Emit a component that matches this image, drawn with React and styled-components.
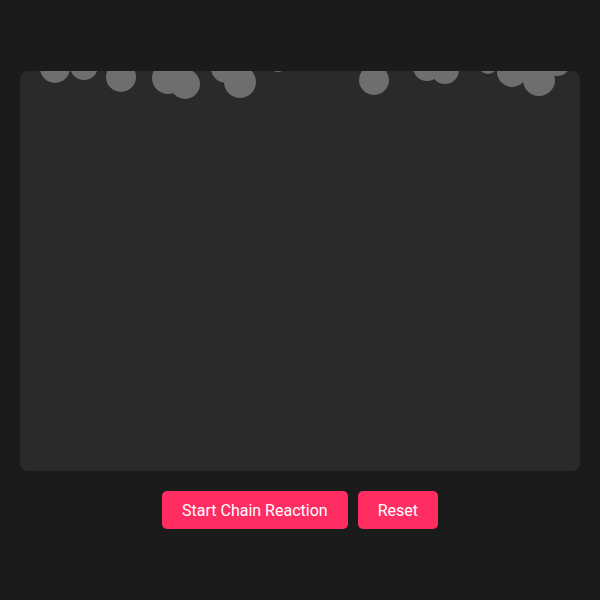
import React from 'react'
import styled, { createGlobalStyle } from 'styled-components'

const Global = createGlobalStyle`
    html, body {
        margin: 0;
        background: #1b1b1b;
        font-family: Roboto, 'Liberation Sans', sans-serif;
    }
`

const Page = styled.div`
    width: 600px;
    height: 600px;
    box-sizing: border-box;
    padding: 71px 20px 0;
    display: flex;
    flex-direction: column;
    align-items: center;
    gap: 20px;
`

const Stage = styled.div`
    position: relative;
    width: 560px;
    height: 400px;
    background: #2a2a2a;
    border-radius: 8px;
    overflow: hidden;
`

const Ball = styled.div`
    position: absolute;
    border-radius: 50%;
    background: #6e6e6e;
`

const Controls = styled.div`
    display: flex;
    gap: 10px;
`

const Button = styled.button`
    height: 38px;
    padding: 0 20px;
    border: none;
    border-radius: 5px;
    background: #ff2d62;
    color: #fff;
    font-family: Roboto, 'Liberation Sans', sans-serif;
    font-size: 16px;
    cursor: pointer;
`

// page coords: x, y (centre), r
const balls = [
    [55, 68, 15], [84, 66, 14], [121, 77, 15], [168, 78, 16], [185, 84, 15],
    [226, 68, 15], [240, 82, 16], [278, 64, 8], [374, 80, 15], [427, 67, 14],
    [445, 70, 14], [488, 64, 10], [512, 72, 15], [539, 80, 16], [557, 62, 14],
    [565, 60, 10],
]

const App = () => {
    return (
        <>
            <Global />
            <Page>
                <Stage>
                    {balls.map(([x, y, r], i) => (
                        <Ball key={i} style={{ left: x - 20 - r, top: y - 71 - r, width: r * 2, height: r * 2 }} />
                    ))}
                </Stage>
                <Controls>
                    <Button>Start Chain Reaction</Button>
                    <Button>Reset</Button>
                </Controls>
            </Page>
        </>
    )
}

export default App
